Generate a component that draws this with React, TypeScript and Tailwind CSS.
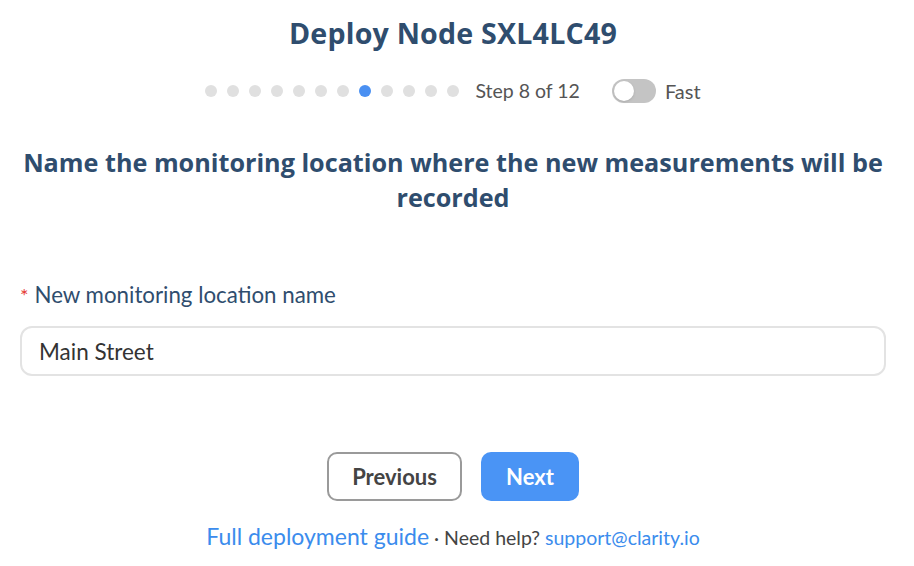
import { useState } from 'react';

const heading = { fontFamily: '"Open Sans", "Noto Sans", sans-serif' };
const body = { fontFamily: 'Lato, "Noto Sans", sans-serif' };

const TOTAL_STEPS = 12;
const CURRENT_STEP = 8;

export default function App() {
  const [fast, setFast] = useState(false);
  const [name, setName] = useState('Main Street');

  return (
    <div className="w-full min-h-[566px] bg-white pl-5 pr-7 pt-[13px] flex flex-col items-center" style={body}>
      {/* Title */}
      <h1 className="text-[28.6px] leading-[40px] font-bold text-[#2f4d6e] tracking-[0.2px]" style={heading}>
        Deploy Node SXL4LC49
      </h1>

      {/* Step progress */}
      <div className="mt-[26px] flex items-center h-6">
        <div className="flex items-center gap-[10px]">
          {Array.from({ length: TOTAL_STEPS }, (_, i) => (
            <span
              key={i}
              className={
                i + 1 === CURRENT_STEP
                  ? 'w-3 h-3 rounded-full bg-[#4a90f2]'
                  : 'w-3 h-3 rounded-full bg-[#e0e0e0]'
              }
            />
          ))}
        </div>
        <span className="ml-[16px] text-[19.5px] text-[#555]">
          Step {CURRENT_STEP} of {TOTAL_STEPS}
        </span>
        <button
          onClick={() => setFast(!fast)}
          className={`ml-8 w-[44px] h-6 rounded-full p-[2px] flex items-center ${fast ? 'bg-[#4a90f2] justify-end' : 'bg-[#c4c4c4] justify-start'}`}
        >
          <span className="w-5 h-5 rounded-full bg-white shadow" />
        </button>
        <span className="ml-[9px] text-[20px] text-[#555]">Fast</span>
      </div>

      {/* Question */}
      <h2 className="mt-[42px] text-[25.2px] leading-[35px] font-bold text-[#2f4d6e] text-center" style={heading}>
        Name the monitoring location where the new measurements will be recorded
      </h2>

      {/* Form field */}
      <div className="w-full mt-[66px]">
        <label className="block text-[22.3px] leading-[28px] text-[#2f4d6e]">
          <span className="text-[#e53935] text-[20px] mr-[6px]">*</span>
          New monitoring location name
        </label>
        <input
          value={name}
          onChange={(e) => setName(e.target.value)}
          className="mt-[17px] w-full h-[50px] rounded-[12px] border-2 border-[#e3e3e3] px-[17px] text-[22.5px] text-[#333] outline-none"
        />
      </div>

      {/* Navigation */}
      <div className="mt-[76px] flex items-center gap-[19px]">
        <button className="h-[49px] w-[135px] rounded-[10px] border-2 border-[#9a9a9a] text-[22px] font-bold text-[#444] bg-white">
          Previous
        </button>
        <button className="h-[49px] w-[98px] rounded-[10px] bg-[#4a94f5] text-[22px] font-bold text-white">
          Next
        </button>
      </div>

      {/* Footer */}
      <p className="mt-[21px] leading-[28px] text-[19.5px] text-[#444]">
        <a className="text-[23px] text-[#3b8ced]">Full deployment guide</a>
        {' · Need help? '}
        <a className="text-[#3b8ced]">support@clarity.io</a>
      </p>
    </div>
  );
}
